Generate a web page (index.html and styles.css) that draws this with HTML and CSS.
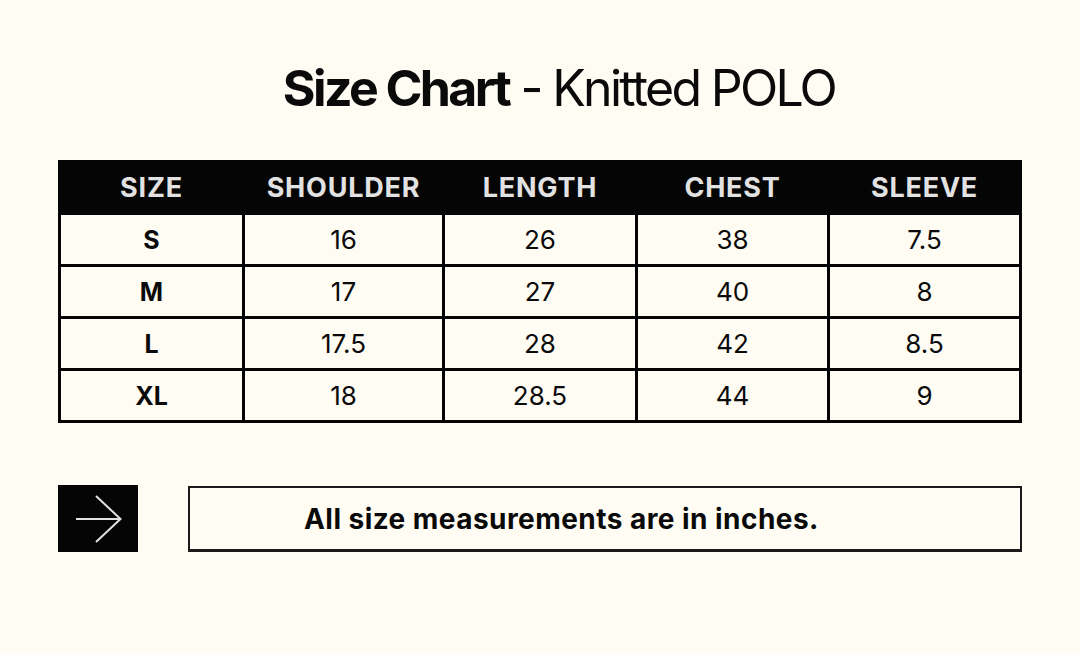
FILE: index.html
```html
<!DOCTYPE html>
<html lang="en">
<head>
<meta charset="utf-8">
<title>Size Chart - Knitted POLO</title>
<link rel="stylesheet" href="styles.css">
</head>
<body>
<main class="page">
  <h1 class="title"><span class="title-bold">Size Chart</span> - Knitted POLO</h1>
  <table class="chart">
    <thead>
      <tr><th>SIZE</th><th>SHOULDER</th><th>LENGTH</th><th>CHEST</th><th>SLEEVE</th></tr>
    </thead>
    <tbody>
      <tr><td class="size">S</td><td>16</td><td>26</td><td>38</td><td>7.5</td></tr>
      <tr><td class="size">M</td><td>17</td><td>27</td><td>40</td><td>8</td></tr>
      <tr><td class="size">L</td><td>17.5</td><td>28</td><td>42</td><td>8.5</td></tr>
      <tr><td class="size">XL</td><td>18</td><td>28.5</td><td>44</td><td>9</td></tr>
    </tbody>
  </table>
  <div class="note-row">
    <div class="arrow-box">
      <svg width="48" height="48" viewBox="0 0 48 48" fill="none" stroke="#e2e2e2" stroke-width="2">
        <path d="M2 24 H46.5 M22 1 L46.5 24 L22 47"/>
      </svg>
    </div>
    <div class="note">All size measurements are in inches.</div>
  </div>
</main>
</body>
</html>
```
FILE: styles.css
```css
html, body {
  margin: 0;
  padding: 0;
  background: #fefcf3;
}
.page {
  width: 1080px;
  height: 653px;
  box-sizing: border-box;
  padding: 56px 58px 0 58px;
  font-family: Inter, "Liberation Sans", sans-serif;
  color: #0a0a0a;
}
.title {
  margin: 0;
  padding-left: 38px;
  text-align: center;
  font-size: 50px;
  font-weight: 400;
  letter-spacing: -2.7px;
  line-height: 64px;
}
.title-bold {
  font-weight: 700;
  letter-spacing: -2.6px;
}
.chart {
  margin-top: 40px;
  width: 964px;
  border-collapse: collapse;
  border: 3px solid #050505;
  table-layout: fixed;
}
.chart th:nth-child(1) { width: 181px; }
.chart th:nth-child(2) { width: 197px; }
.chart th:nth-child(3) { width: 190px; }
.chart th:nth-child(4) { width: 189px; }
.chart th {
  background: #050505;
  color: #e2e2e2;
  font-family: Inter, "Liberation Sans", sans-serif;
  font-weight: 700;
  font-size: 27px;
  letter-spacing: 0.8px;
  height: 49px;
  padding: 0;
  border: 3px solid #050505;
}
.chart td {
  height: 49px;
  padding: 0;
  text-align: center;
  font-size: 26px;
  font-weight: 400;
  border: 3px solid #050505;
}
.chart td.size {
  font-weight: 700;
  font-size: 25px;
}
.note-row {
  margin-top: 62px;
  display: flex;
  align-items: flex-start;
  gap: 50px;
}
.arrow-box {
  width: 80px;
  height: 67px;
  background: #050505;
  display: flex;
  align-items: center;
  justify-content: center;
}
.note {
  margin-top: 1px;
  flex: 1;
  height: 66px;
  box-sizing: border-box;
  border: 2px solid #1a1a1a;
  border-bottom-width: 3px;
  padding-left: 114px;
  display: flex;
  align-items: center;
  font-size: 28px;
  font-weight: 700;
  letter-spacing: 0.45px;
}
```
